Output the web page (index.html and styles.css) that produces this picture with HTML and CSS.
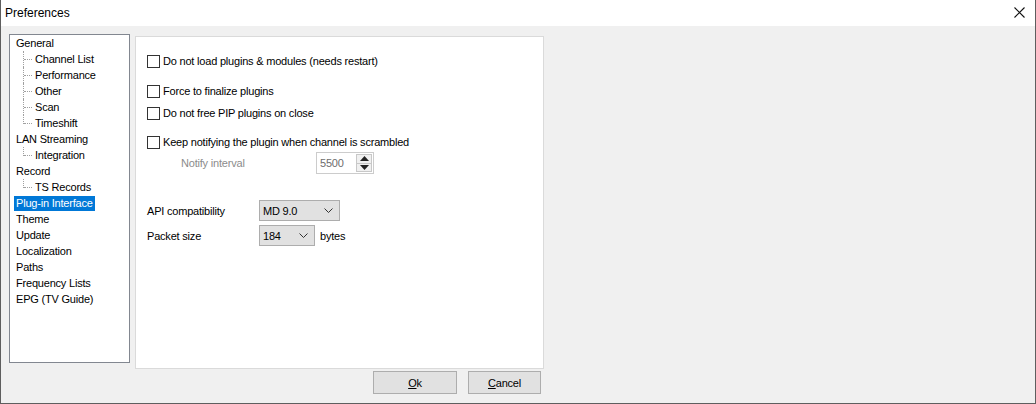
FILE: index.html
```html
<!DOCTYPE html>
<html lang="en">

<head>
    <meta charset="UTF-8">
    <meta name="viewport" content="width=device-width, initial-scale=1.0">
    <title>Preferences</title>
    <link rel="stylesheet" href="styles.css">
</head>

<body>
    <div class="window">
        <!-- Title bar -->
        <div class="titlebar">
            <span class="title">Preferences</span>
            <svg class="close" width="11" height="11" viewBox="0 0 11 11">
                <path d="M0.5 0.5 L10.5 10.5 M10.5 0.5 L0.5 10.5" stroke="#111" stroke-width="1.1" fill="none" />
            </svg>
        </div>

        <div class="client">
            <!-- Tree -->
            <ul class="tree">
                <li class="item">General</li>
                <li class="item child">Channel List</li>
                <li class="item child">Performance</li>
                <li class="item child">Other</li>
                <li class="item child">Scan</li>
                <li class="item child last">Timeshift</li>
                <li class="item">LAN Streaming</li>
                <li class="item child last">Integration</li>
                <li class="item">Record</li>
                <li class="item child last">TS Records</li>
                <li class="item"><span class="selected">Plug-in Interface</span></li>
                <li class="item">Theme</li>
                <li class="item">Update</li>
                <li class="item">Localization</li>
                <li class="item">Paths</li>
                <li class="item">Frequency Lists</li>
                <li class="item">EPG (TV Guide)</li>
            </ul>

            <div class="main">
                <!-- Page -->
                <div class="panel">
                    <label class="row r1"><span class="check"></span>Do not load plugins &amp; modules (needs restart)</label>
                    <label class="row r2"><span class="check"></span>Force to finalize plugins</label>
                    <label class="row r3"><span class="check"></span>Do not free PIP plugins on close</label>
                    <label class="row r4"><span class="check"></span>Keep notifying the plugin when channel is scrambled</label>

                    <div class="field notify">
                        <span class="notify-label">Notify interval</span>
                        <div class="spin">
                            <span class="spin-value">5500</span>
                            <div class="spin-btns">
                                <span class="spin-btn">
                                    <svg width="9" height="5" viewBox="0 0 9 5"><path d="M4.5 0 L9 5 L0 5 Z" fill="#222" /></svg>
                                </span>
                                <span class="spin-btn">
                                    <svg width="9" height="5" viewBox="0 0 9 5"><path d="M0 0 L9 0 L4.5 5 Z" fill="#222" /></svg>
                                </span>
                            </div>
                        </div>
                    </div>

                    <div class="field api">
                        <span class="field-label">API compatibility</span>
                        <div class="combo combo-api">
                            <span>MD 9.0</span>
                            <svg width="9" height="5" viewBox="0 0 9 5"><path d="M0.5 0.5 L4.5 4.5 L8.5 0.5" stroke="#333" fill="none" /></svg>
                        </div>
                    </div>

                    <div class="field packet">
                        <span class="field-label">Packet size</span>
                        <div class="combo combo-packet">
                            <span>184</span>
                            <svg width="9" height="5" viewBox="0 0 9 5"><path d="M0.5 0.5 L4.5 4.5 L8.5 0.5" stroke="#333" fill="none" /></svg>
                        </div>
                        <span class="unit">bytes</span>
                    </div>
                </div>

                <!-- Buttons -->
                <div class="buttons">
                    <button class="btn btn-ok"><u>O</u>k</button>
                    <button class="btn btn-cancel"><u>C</u>ancel</button>
                </div>
            </div>
        </div>
    </div>
</body>

</html>
```

FILE: styles.css
```css
* {
    box-sizing: border-box;
}

body {
    margin: 0;
    font-family: "Liberation Sans", Arial, sans-serif;
    font-size: 11px;
    letter-spacing: -0.2px;
    color: #000;
}

.window {
    width: 1036px;
    height: 404px;
    border: 1px solid #5e5e5e;
    border-top: none;
    background-color: #f0f0f0;
    display: flex;
    flex-direction: column;
}

.titlebar {
    height: 26px;
    background-color: #fff;
    display: flex;
    align-items: center;
    justify-content: space-between;
    padding: 0 10px 1px 4px;
}

.title {
    font-size: 12px;
    letter-spacing: 0;
}

.client {
    display: flex;
    align-items: flex-start;
    padding: 8px 0 0 8px;
}

/* tree view */
.tree {
    list-style: none;
    margin: 0;
    padding: 0;
    width: 121px;
    height: 329px;
    background-color: #fff;
    border: 1px solid #828790;
}

.item {
    position: relative;
    height: 16px;
    line-height: 16px;
    padding-left: 6px;
    white-space: nowrap;
}

.item.child {
    padding-left: 25px;
}

/* dotted lines */
.item.child::before {
    content: "";
    position: absolute;
    left: 14px;
    top: 8px;
    width: 8px;
    border-top: 1px dotted #a0a0a0;
}

.item.child::after {
    content: "";
    position: absolute;
    left: 13px;
    top: 0;
    height: 16px;
    border-left: 1px dotted #a0a0a0;
}

.item.child.last::after {
    height: 9px;
}

.selected {
    display: inline-block;
    margin-left: -2px;
    padding: 0 2px;
    line-height: 15px;
    background-color: #0078d7;
    color: #fff;
}

.main {
    margin-left: 5px;
    display: flex;
    flex-direction: column;
}

.panel {
    margin-top: 2px;
    width: 409px;
    height: 333px;
    background-color: #fff;
    border: 1px solid #dadada;
    padding: 16px 0 0 11px;
}

.row {
    display: flex;
    align-items: center;
    height: 16px;
}

.check {
    width: 13px;
    height: 13px;
    border: 1px solid #333;
    background-color: #fff;
    margin-right: 3px;
}

.r2 {
    margin-top: 14px;
}

.r3 {
    margin-top: 6px;
}

.r4 {
    margin-top: 13px;
}

.field {
    display: flex;
    align-items: center;
}

.notify {
    margin-top: 2px;
    padding-left: 34px;
}

.notify-label {
    width: 135px;
    color: #8c8c8c;
}

.spin {
    width: 58px;
    height: 22px;
    border: 1px solid #cccccc;
    display: flex;
    align-items: center;
    justify-content: space-between;
    padding: 1px 1px 1px 3px;
    color: #6d6d6d;
}

.spin-btns {
    display: flex;
    flex-direction: column;
    width: 16px;
    height: 18px;
}

.spin-btn {
    flex: 1;
    display: flex;
    align-items: center;
    justify-content: center;
    background-color: #f0f0f0;
    border: 1px solid #c8c8c8;
}

.spin-btn + .spin-btn {
    border-top: none;
}

.api {
    margin-top: 26px;
}

.packet {
    margin-top: 4px;
}

.field-label {
    width: 112px;
}

.combo {
    height: 21px;
    background-color: #e1e1e1;
    border: 1px solid #adadad;
    display: flex;
    align-items: center;
    justify-content: space-between;
    padding: 0 6px 0 3px;
}

.combo-api {
    width: 81px;
}

.combo-packet {
    width: 56px;
}

.unit {
    margin-left: 5px;
}

/* dialog buttons */
.buttons {
    display: flex;
    justify-content: flex-end;
    gap: 11px;
    padding-right: 3px;
    margin-top: 2px;
}

.btn {
    height: 23px;
    background-color: #e1e1e1;
    border: 1px solid #adadad;
    font-family: "Liberation Sans", Arial, sans-serif;
    font-size: 11px;
    letter-spacing: -0.2px;
    color: #000;
    padding: 0;
}

.btn-ok {
    width: 84px;
}

.btn-cancel {
    width: 73px;
}
```
